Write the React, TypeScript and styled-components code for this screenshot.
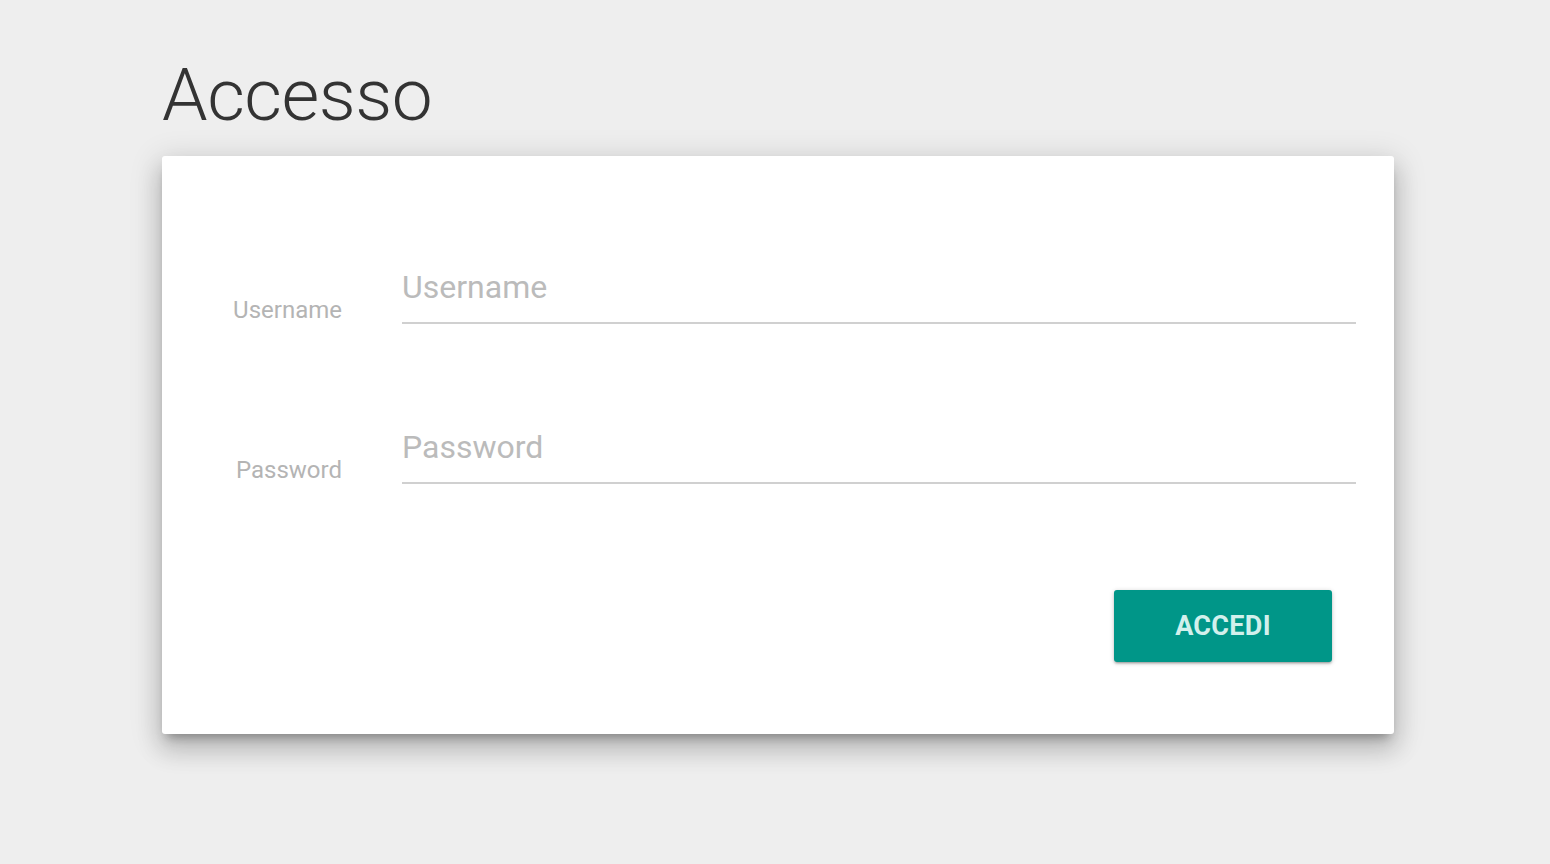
import React from "react";
import styled, { createGlobalStyle } from "styled-components";

const Global = createGlobalStyle`
  html, body { margin: 0; padding: 0; background: #eeeeee; }
  body { font-family: Roboto, "Noto Sans", Arial, sans-serif; }
`;

const Page = styled.div`
  min-height: 864px;
  padding: 52px 156px 0 162px;
  box-sizing: border-box;
`;

const Title = styled.h1`
  margin: 0 0 18px 0;
  font-family: Roboto, sans-serif;
  font-weight: 300;
  font-size: 73px;
  line-height: 86px;
  color: #333333;
  letter-spacing: -0.5px;
`;

const Card = styled.form`
  width: 1232px;
  height: 578px;
  box-sizing: border-box;
  background: #ffffff;
  border-radius: 3px;
  box-shadow: 0 16px 24px 2px rgba(0, 0, 0, 0.14), 0 6px 30px 5px rgba(0, 0, 0, 0.12),
    0 8px 10px -5px rgba(0, 0, 0, 0.3);
  padding: 113px 38px 0 0;
  display: flex;
  flex-direction: column;
`;

const Row = styled.div<{ $mb: number }>`
  display: grid;
  grid-template-columns: 180px 1fr;
  column-gap: 60px;
  align-items: end;
  margin-bottom: ${(p) => p.$mb}px;
`;

const Label = styled.label`
  text-align: right;
  font-size: 24px;
  line-height: 26px;
  color: #b4b4b4;
  padding-bottom: 1px;
`;

const Input = styled.input`
  width: 100%;
  box-sizing: border-box;
  border: none;
  border-bottom: 2px solid #d0d0d0;
  outline: none;
  background: transparent;
  font-family: Roboto, sans-serif;
  font-size: 32px;
  height: 55px;
  padding: 0 0 18px 0;
  color: #333;
  &::placeholder { color: #bbbbbb; opacity: 1; }
`;

const Actions = styled.div`
  display: flex;
  justify-content: flex-end;
  padding-right: 24px;
`;

const Button = styled.button`
  width: 218px;
  height: 72px;
  border: none;
  border-radius: 3px;
  background: #009688;
  color: #d2f0ec;
  font-family: Roboto, sans-serif;
  font-weight: 700;
  font-size: 27px;
  letter-spacing: 0.3px;
  text-transform: uppercase;
  box-shadow: 0 2px 2px 0 rgba(0, 0, 0, 0.14), 0 3px 1px -2px rgba(0, 0, 0, 0.12),
    0 1px 5px 0 rgba(0, 0, 0, 0.2);
  cursor: pointer;
`;

export default function App() {
  return (
    <>
      <Global />
      <Page>
        <Title>Accesso</Title>
        <Card onSubmit={(e) => e.preventDefault()}>
          <Row $mb={105}>
            <Label htmlFor="u">Username</Label>
            <Input id="u" placeholder="Username" />
          </Row>
          <Row $mb={106}>
            <Label htmlFor="p">Password</Label>
            <Input id="p" type="password" placeholder="Password" />
          </Row>
          <Actions>
            <Button type="submit">Accedi</Button>
          </Actions>
        </Card>
      </Page>
    </>
  );
}
